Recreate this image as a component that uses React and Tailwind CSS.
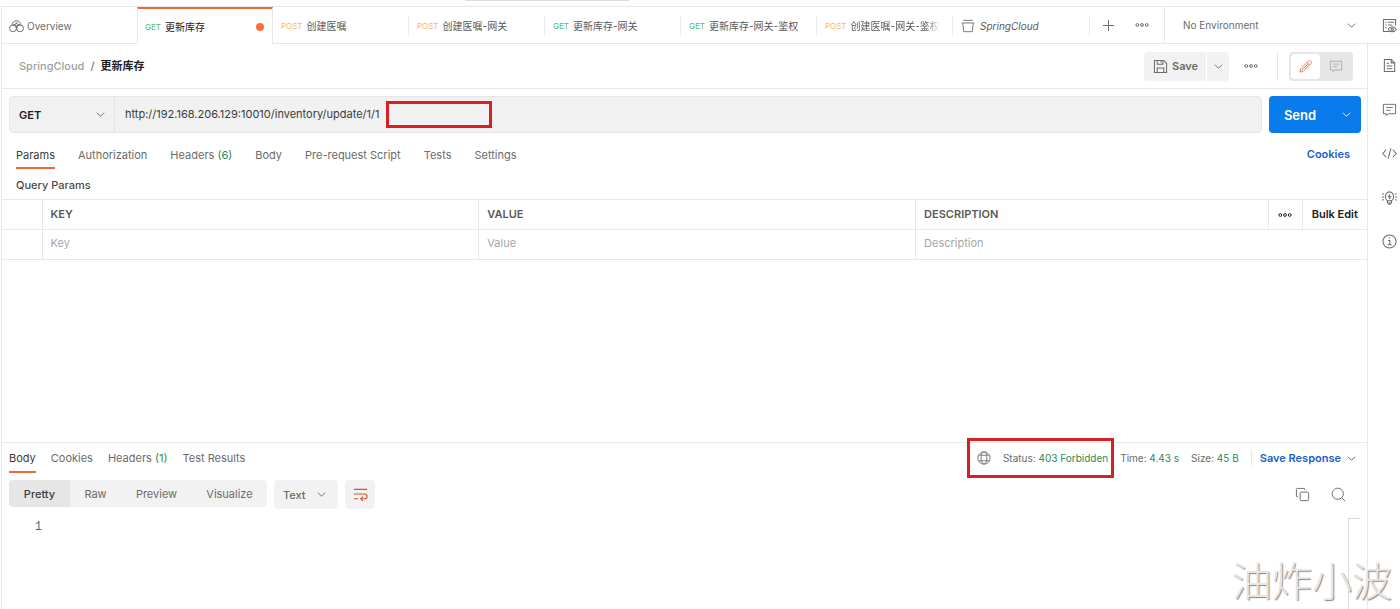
const LINE = "border-[#e8e8e8]";

function Icon({ size = 14, className = "", children, box = 16, width = 1 }) {
  return (
    <svg
      width={size}
      height={size}
      viewBox={`0 0 ${box} ${box}`}
      fill="none"
      stroke="currentColor"
      strokeWidth={width}
      className={`shrink-0 ${className}`}
      aria-hidden="true"
    >
      {children}
    </svg>
  );
}

const Chevron = ({ className = "" }) => (
  <Icon size={9} box={10} className={className}>
    <path d="M1 3l4 4 4-4" />
  </Icon>
);

const Dots = ({ className = "" }) => (
  <svg width="14" height="6" viewBox="0 0 14 6" fill="none" stroke="currentColor" className={`shrink-0 ${className}`} aria-hidden="true">
    <circle cx="2.3" cy="3" r="1.4" />
    <circle cx="7" cy="3" r="1.4" />
    <circle cx="11.7" cy="3" r="1.4" />
  </svg>
);

const OverviewIcon = () => (
  <Icon size={15} className="text-[#6b6b6b]">
    <circle cx="4.2" cy="10" r="3.6" />
    <circle cx="11.8" cy="10" r="3.6" />
    <path d="M3.300 6.500C3.300 3.900 5.400 1.800 8 1.800s4.700 2.100 4.700 4.700M4.300 6.400C6 5.200 7.300 6.300 8 8.300 8.700 6.300 10 5.200 11.700 6.400M8 8.300v3M5.600 7l3 -3.500M10.400 7l-3-3.500" />
  </Icon>
);

const CollectionIcon = () => (
  <Icon size={14} className="text-[#6b6b6b]">
    <path d="M2.500 1.500h11M1 4.500h14M2 4.500l1.200 10h9.600l1.200-10" />
  </Icon>
);

const SaveIcon = () => (
  <Icon size={15} width={1.1}>
    <path d="M1.500 1.500h10l3 3v10h-13zM4.500 1.500v4h6v-4M4.500 14.500v-5h7v5M8.500 2.500v1.500" />
  </Icon>
);

const PencilIcon = () => (
  <Icon size={15}>
    <path d="M2 14l.8-3.500 8.400-8.400c.6-.6 1.500-.6 2.100 0l.6.6c.6.6.6 1.500 0 2.100L5.500 13.200zM9.700 3.600l2.700 2.700M4 12l7.300-7.300" />
  </Icon>
);

const CommentIcon = ({ size = 14 }) => (
  <Icon size={size}>
    <path d="M1.500 2.500h13v10H7l-2.500 2v-2h-3zM4.500 5.800h7M4.500 8.800h4.500" />
  </Icon>
);

const DocIcon = () => (
  <Icon size={15} width={1.1}>
    <path d="M2.500 1.500h7.500l3.500 3.500v9.500h-11zM9.800 1.500v3.700h3.700M5 5.500h2.500M5 8.500h6M5 11.500h6" />
  </Icon>
);

const CodeIcon = () => (
  <Icon size={15} width={1.1}>
    <path d="M4.500 4L.8 8l3.700 4M11.500 4l3.700 4-3.700 4M9.500 2.500l-3 11" />
  </Icon>
);

const BulbIcon = () => (
  <Icon size={15} width={1.1}>
    <path d="M5.800 11.500C4.300 10.500 3.500 9 3.500 7.200 3.500 4.500 5.500 2 8 2s4.500 2.500 4.500 5.200c0 1.800-.8 3.300-2.300 4.300z" />
    <path d="M5.800 11.500v2.300h4.400v-2.300M6.500 15.300h3M8.500 4.500L6.700 7.200h2.600L7.500 9.700M.3 4l1.700.6M0 7.500h2M.3 11l1.700-.8M15.700 4l-1.700.6M16 7.500h-2M15.700 11l-1.700-.8" />
  </Icon>
);

const InfoIcon = () => (
  <Icon size={15} width={1.1}>
    <circle cx="8" cy="8" r="7" />
    <path d="M6.500 7h1.800v4.500M6 11.500h4.300M7.400 4.300h1.300" />
  </Icon>
);

const EnvIcon = () => (
  <Icon size={15} width={1.1}>
    <path d="M8 14.500H1.500v-13h13V8M3.500 4.500H5M6.500 4.500h6.300M3.500 7.500H5M6.500 7.500h4M3.500 10.500H5" />
    <path d="M6.500 12c1-1.700 2.500-2.700 4.400-2.700s3.400 1 4.400 2.700c-1 1.700-2.500 2.700-4.400 2.700S7.500 13.700 6.500 12z" />
    <circle cx="10.900" cy="12" r="1.200" />
  </Icon>
);

const GlobeIcon = () => (
  <Icon size={14}>
    <circle cx="8" cy="8" r="7" />
    <ellipse cx="8" cy="8" rx="3.400" ry="7" />
    <path d="M2 4.800h12M2 11.200h12" />
  </Icon>
);

const WrapIcon = () => (
  <Icon size={15} width={1.2}>
    <path d="M1 2.500h14M1 7.500h11.500a2.500 2.500 0 010 5H8.500M10.500 10.200L8.200 12.500l2.300 2.300M1 12.500h4.500" />
  </Icon>
);

const CopyIcon = () => (
  <Icon size={15}>
    <rect x="5.500" y="5.500" width="9" height="9" rx="1" />
    <path d="M3.500 10.500h-1a1 1 0 01-1-1v-7a1 1 0 011-1h7a1 1 0 011 1v1" />
  </Icon>
);

const SearchIcon = () => (
  <Icon size={15}>
    <circle cx="7.200" cy="7.200" r="6" />
    <path d="M11.500 11.500l3.500 3.500" />
  </Icon>
);

const requestTabs = [
  { method: "GET", name: "更新库存", active: true },
  { method: "POST", name: "创建医嘱" },
  { method: "POST", name: "创建医嘱-网关" },
  { method: "GET", name: "更新库存-网关" },
  { method: "GET", name: "更新库存-网关-鉴权" },
  { method: "POST", name: "创建医嘱-网关-鉴权", fade: true },
];

function RequestTab({ tab }) {
  const color = tab.method === "GET" ? "text-[#4fb97c]" : "text-[#fbb066]";
  const frame = tab.active
    ? "border-x border-t-2 border-x-[#e8e8e8] border-t-[#f0673a]"
    : "border-b border-[#e8e8e8] pt-[2px]";
  return (
    <button className={`flex w-[136px] min-w-0 items-center ${frame}`}>
      <span
        className={`flex h-5 min-w-0 flex-1 items-center gap-1 pr-3 ${tab.active ? "pl-[7px]" : "border-r border-[#ececec] pl-2"}`}
      >
        <span className={`text-[8px] ${color}`}>{tab.method}</span>
        <span
          className={`min-w-0 flex-1 overflow-hidden whitespace-nowrap text-left text-[10px] ${tab.active ? "text-[#212121]" : "text-[#5a5a5a]"} ${
            tab.fade ? "[mask-image:linear-gradient(to_right,black_85%,transparent)]" : ""
          }`}
        >
          {tab.name}
        </span>
        {tab.active && <span className="-mr-1 size-2 rounded-full bg-[#ff6c37]" />}
      </span>
    </button>
  );
}

function TopBar() {
  return (
    <header className={`flex h-[38px] border-t ${LINE}`}>
      <nav className="flex min-w-0">
        <button className={`flex w-[136px] items-center gap-[3px] border-b border-l ${LINE} pl-[7px] pt-[2px] text-[10px] text-[#6b6b6b]`}>
          <OverviewIcon />
          Overview
        </button>
        {requestTabs.map((t) => (
          <RequestTab key={t.name} tab={t} />
        ))}
        <button className={`flex w-[137px] items-center border-b ${LINE} pt-[2px]`}>
          <span className="flex h-5 flex-1 items-center gap-[5px] border-r border-[#ececec] pl-2 text-[10px] italic text-[#5a5a5a]">
            <CollectionIcon />
            SpringCloud
          </span>
        </button>
      </nav>
      <div className={`flex flex-1 items-center justify-end gap-5 border-b ${LINE} pr-[15px] text-[#6b6b6b]`}>
        <button aria-label="New tab">
          <Icon size={13} width={1.2}>
            <path d="M8 1v14M1 8h14" />
          </Icon>
        </button>
        <button aria-label="Tab options">
          <Dots />
        </button>
      </div>
      <div className={`relative flex w-[204px] items-center border-b border-l ${LINE} text-[#6b6b6b]`}>
        <select aria-label="Environment" className="w-full appearance-none bg-transparent pl-[18px] text-[10px] outline-none">
          <option>No Environment</option>
        </select>
        <Chevron className="pointer-events-none absolute right-3" />
      </div>
      <div className={`flex w-8 items-center justify-end border-b ${LINE} pr-[3px] text-[#6b6b6b]`}>
        <button aria-label="Environment quick look">
          <EnvIcon />
        </button>
      </div>
    </header>
  );
}

function TitleRow() {
  return (
    <div className={`flex h-[45px] items-center border-b ${LINE} pl-[17px] pr-[14px]`}>
      <div className="flex flex-1 items-center gap-[6px] text-[11px] font-semibold">
        <a href="#collection" className="font-medium text-[#a0a0a0]">SpringCloud</a>
        <span className="text-[#8a8a8a]">/</span>
        <h1 className="text-[#212121]">更新库存</h1>
      </div>
      <div className="flex items-center text-[#6b6b6b]">
        <button className="flex h-[29px] w-[62px] items-center gap-1 rounded-l bg-[#f2f2f2] pl-[9px] text-[11px] font-semibold">
          <SaveIcon />
          Save
        </button>
        <button aria-label="Save options" className="ml-px flex h-[29px] w-[22px] items-center justify-center rounded-r bg-[#f2f2f2]">
          <Chevron />
        </button>
        <button aria-label="More actions" className="ml-[15px]">
          <Dots />
        </button>
        <div className={`ml-[19px] mr-[11px] h-7 border-l ${LINE}`} />
        <div className="flex h-[29px] rounded bg-[#e6e6e6] p-[2px]">
          <button aria-label="Build" className="flex w-[29px] items-center justify-center rounded bg-white text-[#ff6c37]">
            <PencilIcon />
          </button>
          <button aria-label="Comments" className="flex w-[31px] items-center justify-center text-[#a6a6a6]">
            <CommentIcon />
          </button>
        </div>
      </div>
    </div>
  );
}

function UrlRow() {
  return (
    <div className="flex h-[37px] gap-[7px] pl-[7px] pr-[6px] text-[#212121]">
      <div className="flex min-w-0 flex-1 rounded border border-[#e6e6e6] bg-[#f1f1f1]">
        <div className="relative flex w-[105px] items-center border-r border-[#e2e2e2]">
          <select aria-label="Method" className="h-full w-full appearance-none bg-transparent pl-[9px] text-[11px] font-semibold outline-none">
            <option>GET</option>
          </select>
          <Chevron className="pointer-events-none absolute right-[9px] text-[#6b6b6b]" />
        </div>
        <div className="relative flex flex-1 items-center">
          <input
            aria-label="Request URL"
            defaultValue="http://192.168.206.129:10010/inventory/update/1/1"
            className="h-full w-full bg-transparent pb-[2px] pl-[10px] text-[11px] text-[#3b3b3b] outline-none"
          />
          <div className="pointer-events-none absolute left-[271px] top-1 h-[27px] w-[106px] border-[3px] border-[#d91f26]" />
        </div>
      </div>
      <div className="flex rounded bg-[#097bed] text-white">
        <button className="w-[62px] text-[13px] font-semibold">Send</button>
        <button aria-label="Send options" className="flex w-[30px] items-center justify-center">
          <Chevron />
        </button>
      </div>
    </div>
  );
}

const sections = [
  ["Params"],
  ["Authorization"],
  ["Headers", "(6)"],
  ["Body"],
  ["Pre-request Script"],
  ["Tests"],
  ["Settings"],
];

function TabList({ items, className }) {
  return (
    <div className={`flex text-[11px] text-[#6b6b6b] ${className}`}>
      {items.map(([label, count], i) => (
        <button
          key={label}
          className={`whitespace-nowrap border-b-2 pt-[2px] ${i === 0 ? "border-[#f0673a] text-[#3b3b3b]" : "border-transparent"}`}
        >
          {label}
          {count && <span className="text-[#2b8a57]"> {count}</span>}
        </button>
      ))}
    </div>
  );
}

function ParamsTable() {
  const head = `border-r ${LINE} px-2 pb-[2px] text-left font-semibold`;
  const cell = "px-2 pb-[3px]";
  const input = "block w-full bg-transparent outline-none placeholder:text-[#a6a6a6]";
  return (
    <table className={`w-full table-fixed border-collapse border-y ${LINE} text-[11px] text-[#5a5a5a]`}>
      <colgroup>
        <col className="w-10" />
        <col className="w-[32%]" />
        <col className="w-[32%]" />
        <col />
        <col className="w-[34px]" />
        <col className="w-[65px]" />
      </colgroup>
      <thead>
        <tr className={`h-[30px] border-b ${LINE}`}>
          <td className={`border-r ${LINE}`} />
          <th className={head}>KEY</th>
          <th className={head}>VALUE</th>
          <th className={head}>DESCRIPTION</th>
          <td className={`border-r ${LINE} text-[#212121]`}>
            <button aria-label="Column options" className="flex w-full justify-center">
              <Dots />
            </button>
          </td>
          <td className="pb-[2px] text-center">
            <button className="whitespace-nowrap font-semibold text-[#212121]">Bulk Edit</button>
          </td>
        </tr>
      </thead>
      <tbody>
        <tr className="h-[30px]">
          <td className={`border-r ${LINE}`} />
          <td className={`border-r ${LINE} ${cell}`}>
            <input aria-label="Key" placeholder="Key" className={input} />
          </td>
          <td className={`border-r ${LINE} ${cell}`}>
            <input aria-label="Value" placeholder="Value" className={input} />
          </td>
          <td colSpan={3} className={cell}>
            <input aria-label="Description" placeholder="Description" className={input} />
          </td>
        </tr>
      </tbody>
    </table>
  );
}

function Metric({ label, value }) {
  return (
    <span className="whitespace-nowrap">
      {label} <span className="text-[#2b8a57]">{value}</span>
    </span>
  );
}

function ResponsePane() {
  return (
    <section className={`flex flex-1 flex-col border-t ${LINE}`}>
      <div className="flex items-center justify-between pl-[7px] pr-[11px]">
        <TabList items={[["Body"], ["Cookies"], ["Headers", "(1)"], ["Test Results"]]} className="h-[29px] gap-[15px]" />
        <div className="flex h-[30px] items-center text-[10px] text-[#6b6b6b]">
          <div className="relative mr-3 flex items-center gap-3">
            <GlobeIcon />
            <Metric label="Status:" value="403 Forbidden" />
            <div className="pointer-events-none absolute -inset-y-3 -left-[10px] -right-[6px] border-[3px] border-[#d91f26]" />
          </div>
          <Metric label="Time:" value="4.43 s" />
          <span className="ml-3">
            <Metric label="Size:" value="45 B" />
          </span>
          <button className={`ml-3 flex items-center gap-[6px] border-l ${LINE} pl-2 text-[11px] font-semibold text-[#1a5fd0]`}>
            Save Response
            <Chevron />
          </button>
        </div>
      </div>
      <div className="mt-[7px] flex items-start pl-[7px] pr-[21px] text-[11px] text-[#6b6b6b]">
        <div className="flex h-[27px] overflow-hidden rounded bg-[#f2f2f2]">
          <button className="w-[61px] bg-[#e6e6e6] font-medium text-[#3b3b3b]">Pretty</button>
          <button className="w-[51px]">Raw</button>
          <button className="w-[71px]">Preview</button>
          <button className="w-[75px]">Visualize</button>
        </div>
        <div className="relative ml-[7px] flex h-[29px] w-16 items-center rounded bg-[#f2f2f2]">
          <select aria-label="Response format" className="h-full w-full appearance-none bg-transparent pl-[9px] font-medium outline-none">
            <option>Text</option>
          </select>
          <Chevron className="pointer-events-none absolute right-3" />
        </div>
        <button aria-label="Wrap lines" className="ml-[7px] flex h-[29px] w-[30px] items-center justify-center rounded bg-[#f2f2f2] text-[#d9552b]">
          <WrapIcon />
        </button>
        <div className="ml-auto flex h-[29px] items-center gap-[21px]">
          <button aria-label="Copy response"><CopyIcon /></button>
          <button aria-label="Search response"><SearchIcon /></button>
        </div>
      </div>
      <div className="mt-[9px] flex flex-1 pr-[7px]">
        <pre className="w-10 pt-px text-right font-['Liberation_Mono',monospace] text-[12px] leading-4 text-[#237893]">1</pre>
        <div className="flex-1" />
        <div className="w-3 border-l border-t border-[#d9d9d9]" />
      </div>
    </section>
  );
}

export default function App() {
  return (
    <div className="relative flex min-h-screen flex-col overflow-hidden bg-white pl-px font-['Inter','Noto_Sans_CJK_SC',sans-serif] leading-4">
      <div className="flex h-[6px] justify-center">
        <div className="mr-[308px] h-px w-[164px] bg-[#dcdcdc]" />
      </div>
      <TopBar />
      <div className="flex flex-1">
        <main className={`flex min-w-0 flex-1 flex-col border-x ${LINE}`}>
          <TitleRow />
          <div className="flex flex-col pt-[7px]">
            <UrlRow />
            <div className="flex items-center justify-between pl-[14px] pr-[17px]">
              <TabList items={sections} className="mt-[7px] h-[29px] gap-[23px]" />
              <a href="#cookies" className="mt-[5px] text-[11px] font-semibold text-[#1a5fd0]">Cookies</a>
            </div>
            <h2 className="flex h-[30px] items-center pl-[14px] pt-px text-[11px] font-medium text-[#4a4a4a]">Query Params</h2>
            <ParamsTable />
          </div>
          <div className="h-[182px]" />
          <ResponsePane />
        </main>
        <aside className="flex w-8 flex-col items-end gap-[29px] pr-[3px] pt-[14px] text-[#6b6b6b]">
          <button aria-label="Documentation" className="block"><DocIcon /></button>
          <button aria-label="Comments" className="block"><CommentIcon size={15} /></button>
          <button aria-label="Code" className="block"><CodeIcon /></button>
          <button aria-label="Related requests" className="block"><BulbIcon /></button>
          <button aria-label="Info" className="block"><InfoIcon /></button>
        </aside>
      </div>
      <div className="pointer-events-none absolute bottom-0 right-2 font-['Noto_Sans_CJK_SC',sans-serif] text-[40px] font-light leading-[60px] text-[#e6e6e6] [text-shadow:1px_1px_1px_#888]">
        油炸小波
      </div>
    </div>
  );
}
